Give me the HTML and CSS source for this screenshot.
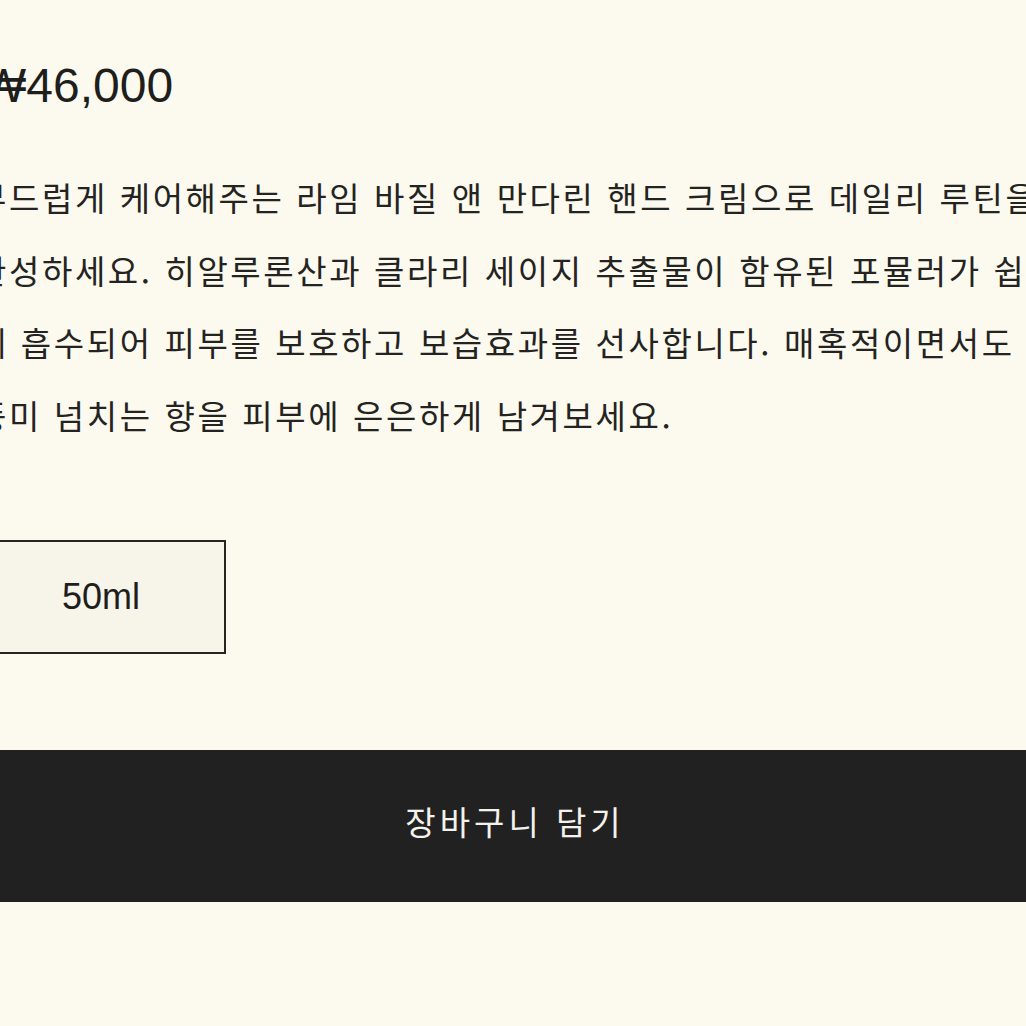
FILE: index.html
```html
<!DOCTYPE html>
<html lang="ko">
<head>
<meta charset="utf-8">
<title>라임 바질 앤 만다린 핸드 크림</title>
<link rel="stylesheet" href="styles.css">
</head>
<body>
<main class="product">
  <div class="info">
    <p class="price">₩46,000</p>
    <p class="desc">부드럽게 케어해주는 라임 바질 앤 만다린 핸드 크림으로 데일리 루틴을<br>완성하세요. 히알루론산과 클라리 세이지 추출물이 함유된 포뮬러가 쉽<br>게 흡수되어 피부를 보호하고 보습효과를 선사합니다. 매혹적이면서도<br>풍미 넘치는 향을 피부에 은은하게 남겨보세요.</p>
    <div class="sizes">
      <button class="size">50ml</button>
    </div>
  </div>
  <button class="cart">장바구니 담기</button>
</main>
</body>
</html>
```
FILE: styles.css
```css
html, body {
  margin: 0;
  padding: 0;
  background: #fcf9ee;
  overflow: hidden;
}
.product {
  display: flex;
  flex-direction: column;
  padding-top: 58px;
  font-family: "Liberation Sans", "Noto Sans CJK KR", sans-serif;
  color: #222220;
}
.info {
  margin-left: -24px;
  display: flex;
  flex-direction: column;
}
.price {
  margin: 0;
  font-size: 48px;
  line-height: 56px;
  padding-left: 5px;
  color: #1e1e1c;
}
.desc {
  margin: 47px 0 0;
  font-family: "Noto Sans CJK KR", sans-serif;
  font-size: 33px;
  letter-spacing: 2.6px;
  line-height: 72.5px;
  white-space: nowrap;
  color: #232321;
  padding-left: 0;
}
.sizes {
  display: flex;
  margin-top: 89px;
}
.size {
  width: 250px;
  height: 114px;
  border: 2px solid #26251f;
  background: #f7f4ea;
  font-family: "Liberation Sans", sans-serif;
  font-size: 36px;
  color: #1e1e1c;
  padding: 0;
}
.cart {
  margin-top: 96px;
  height: 152px;
  border: none;
  background: #212121;
  color: #f4f2ec;
  font-family: "Noto Sans CJK KR", sans-serif;
  font-size: 33px;
  letter-spacing: 4px;
  padding: 0 0 10px 4px;
  width: 100%;
}
```
